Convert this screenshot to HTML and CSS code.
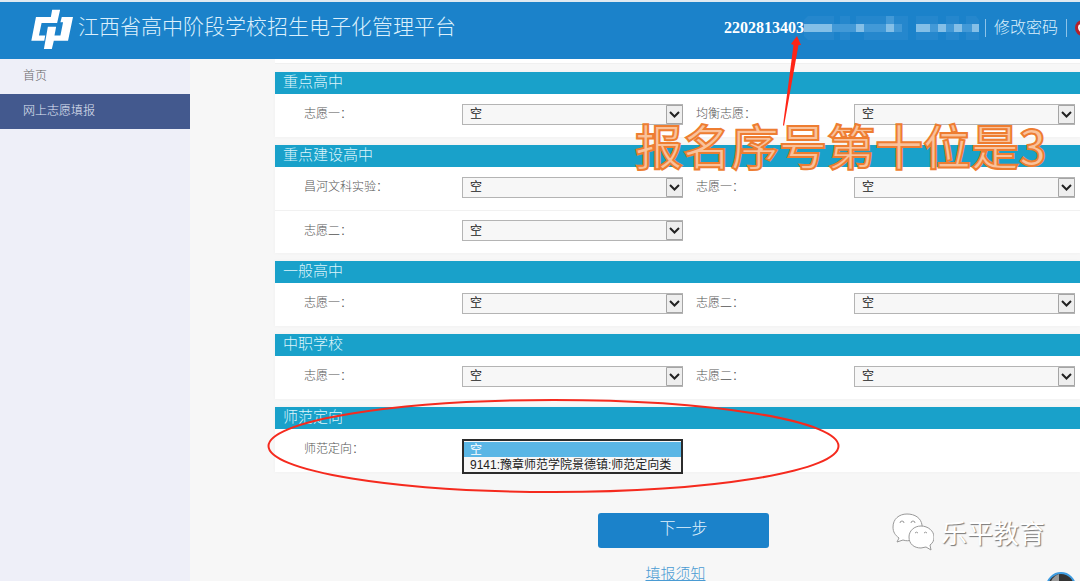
FILE: index.html
```html
<!DOCTYPE html>
<html lang="zh-CN">
<head>
<meta charset="utf-8">
<meta name="viewport" content="width=device-width, initial-scale=1">
<title>江西省高中阶段学校招生电子化管理平台</title>
<link rel="stylesheet" href="styles.css">
</head>
<body>
<svg class="defs" aria-hidden="true">
  <symbol id="arrow" viewBox="0 0 17 19"><path class="arrow-box" d="M.5 .5H16.5V18.5H.5Z"/><path class="arrow-mark" d="M4 7L8.500 11.500L13 7"/></symbol>
</svg>
<div class="page">
  <header class="header">
    <svg class="logo" viewBox="94 26 130 124" aria-hidden="true">
      <path d="M158 28H182L173 68H126L118 106H137L134 122H95L109 50H154Z"/>
      <path d="M145 80H170L165 106H183L191 66H183L187 50H221L206 122H163L157 147H133Z"/>
    </svg>
    <h1 class="brand">江西省高中阶段学校招生电子化管理平台</h1>
    <div class="account">
      <span class="number">2202813403</span>
      <svg class="mosaic" viewBox="0 0 176 24" aria-hidden="true">
        <path class="m1" d="M4 0H30V24H4L0 20V4ZM36 0H46V24H36ZM52 0H78V12H104V24H60V15H52ZM78 0H104V12H78ZM112 0H134V24H112ZM142 0H155V24H142ZM162 0H172L175 4V24H162Z"/>
        <path class="m2" d="M28 8H52V16H28ZM52 8H98V16H52ZM112 8H175V16H112ZM82 0H90V16H82Z"/>
        <path class="m3" d="M0 8H28V16H0ZM52 8H60V16H52ZM82 8H90V16H82ZM112 8H126V16H112ZM134 8H142V16H134ZM150 8H158V16H150ZM168 8H175V16H168Z"/>
      </svg>
      <a class="password" href="#">修改密码</a>
      <a class="exit" href="#" aria-label="退出"><svg viewBox="0 0 16 16"><circle cx="8" cy="8" r="8"/><path d="M5 5A4 4 0 1 0 11 5M8 3V8"/></svg></a>
    </div>
  </header>
  <div class="columns">
    <nav class="sidebar">
      <a class="item" href="#">首页</a>
      <a class="item active" href="#" aria-current="page">网上志愿填报</a>
    </nav>
    <main class="main">
      <form class="form">
        <div class="tail"></div>
        <section class="panel">
          <h2 class="title">重点高中</h2>
          <div class="row">
            <label for="a1">志愿一：</label><div class="control"><select id="a1"><option>空</option></select><svg><use href="#arrow"/></svg></div>
            <label class="second" for="a2">均衡志愿：</label><div class="control"><select id="a2"><option>空</option></select><svg><use href="#arrow"/></svg></div>
          </div>
        </section>
        <section class="panel">
          <h2 class="title">重点建设高中</h2>
          <div class="row">
            <label for="b1">昌河文科实验：</label><div class="control"><select id="b1"><option>空</option></select><svg><use href="#arrow"/></svg></div>
            <label class="second" for="b2">志愿一：</label><div class="control"><select id="b2"><option>空</option></select><svg><use href="#arrow"/></svg></div>
          </div>
          <div class="row">
            <label for="b3">志愿二：</label><div class="control"><select id="b3"><option>空</option></select><svg><use href="#arrow"/></svg></div>
          </div>
        </section>
        <section class="panel">
          <h2 class="title">一般高中</h2>
          <div class="row">
            <label for="c1">志愿一：</label><div class="control"><select id="c1"><option>空</option></select><svg><use href="#arrow"/></svg></div>
            <label class="second" for="c2">志愿二：</label><div class="control"><select id="c2"><option>空</option></select><svg><use href="#arrow"/></svg></div>
          </div>
        </section>
        <section class="panel">
          <h2 class="title">中职学校</h2>
          <div class="row">
            <label for="d1">志愿一：</label><div class="control"><select id="d1"><option>空</option></select><svg><use href="#arrow"/></svg></div>
            <label class="second" for="d2">志愿二：</label><div class="control"><select id="d2"><option>空</option></select><svg><use href="#arrow"/></svg></div>
          </div>
        </section>
        <section class="panel">
          <h2 class="title">师范定向</h2>
          <div class="row">
            <label for="e1">师范定向：</label>
            <div class="control"><select class="list" id="e1" size="2"><option selected>空</option><option>9141:豫章师范学院景德镇:师范定向类</option></select></div>
          </div>
        </section>
        <div class="actions">
          <button class="next" type="button">下一步</button>
          <a class="notice" href="#">填报须知</a>
        </div>
      </form>
    </main>
  </div>
  <svg class="marks" viewBox="0 0 1080 581" aria-hidden="true">
    <ellipse cx="553.500" cy="446" rx="285" ry="46"/>
    <path d="M797 36L801 45L798.500 45L784 126L783 125L793.500 45L791 44Z"/>
  </svg>
  <p class="callout">报名序号第十位是3</p>
  <div class="watermark">
    <svg viewBox="0 0 42 38" aria-hidden="true">
      <path d="M15 1C7 1 1 6 1 14C1 19 3 22 7 25L5 29L11 27C14 28 17 28 19 27C28 26 31 20 30 12C29 5 23 1 15 1Z"/>
      <path d="M29 13C22 13 17 18 17 24C17 31 22 35 29 35L34 34L39 37L38 32C41 30 42 27 42 24C42 18 36 13 29 13Z"/>
      <path class="eyes" d="M8 10A2 2 0 0 1 12 10M19 10A2 2 0 0 1 23 10M23 20A2 2 0 0 1 26 20M32 20A2 2 0 0 1 35 20"/>
    </svg>
    <span>乐平教育</span>
  </div>
  <svg class="avatar" viewBox="0 0 30 30" aria-hidden="true"><circle cx="15" cy="15" r="14"/><path d="M13 2V14H4A13 13 0 0 1 13 2Z"/></svg>
</div>
</body>
</html>
```
FILE: styles.css
```css
* { box-sizing: border-box; }
body { margin: 0; font-family: "Liberation Serif", "Noto Sans CJK SC", serif; font-weight: 300; font-size: 12px; line-height: 20px; color: #555; background: #f7f7f7; }
h1, h2, p { margin: 0; font-weight: 300; }
a { color: inherit; text-decoration: none; }
.defs { position: absolute; width: 0; height: 0; }
.page { position: relative; display: flex; flex-direction: column; height: 100vh; overflow: hidden; }
.header { display: flex; flex: none; align-items: flex-start; height: 59px; padding: 7px 0 0 31px; border-top: 2px solid #dfe9f1; background: #1b82ca; color: #dcf0fc; }
.logo { width: 43px; height: 41px; fill: #fff; }
.brand { flex: 1; margin-left: 4px; font-size: 21px; line-height: 36px; white-space: nowrap; }
.account { display: flex; align-items: center; height: 38px; font-size: 16px; }
.number { font-weight: 700; color: #fff; }
.mosaic { width: 176px; height: 24px; }
.m1 { fill: #2587cd; }
.m2 { fill: #4299d7; }
.m3 { fill: #84bfe7; }
.password { margin-left: 5px; padding: 0 8px; border-left: 1px solid #8dc3e8; border-right: 1px solid #8dc3e8; line-height: 18px; white-space: nowrap; }
.exit { width: 5px; height: 16px; margin-left: 8px; overflow: hidden; }
.exit svg { display: block; width: 16px; height: 16px; fill: #b5202b; }
.exit path { fill: none; stroke: #fff; stroke-width: 2; }
.columns { display: flex; flex: 1; min-height: 0; }
.sidebar { flex: none; width: 190px; background: #eeeff8; }
.item { display: block; height: 35px; padding-left: 23px; line-height: 35px; color: #666; }
.active { background: #43598e; color: #e2e8f5; }
.main { flex: 1; padding-left: 85px; }
.form { display: flex; flex-direction: column; gap: 8px; }
.tail { height: 5px; background: #fff; border-bottom: 1px solid #f0f0f0; }
.panel { background: #fff; box-shadow: 0 0 3px #eee; }
.title { height: 22px; padding-left: 8px; background: #19a1ca; color: #dcf4fb; font-size: 15px; line-height: 20px; }
.row { display: grid; grid-template-columns: 158px minmax(0, 1fr) 171px minmax(0, 1fr); align-items: center; height: 43px; padding: 0 5px 3px 29px; }
.row + .row { border-top: 1px solid #f1f1f1; }
.second { padding-left: 13px; }
.control { position: relative; display: grid; height: 21px; }
.control select { width: 100%; height: 21px; padding: 0 7px; border: 1px solid #b4b4b4; border-radius: 0; appearance: none; outline: 0; background: #f7f7f7; color: #222; font-family: "Liberation Sans", "Noto Sans CJK SC", sans-serif; font-size: 12px; }
.control svg { position: absolute; top: 1px; right: 0; width: 17px; height: 19px; pointer-events: none; }
.arrow-box { fill: #eee; stroke: #a5a5a5; }
.arrow-mark { fill: none; stroke: #222; stroke-width: 2; }
.control .list { position: absolute; top: 0; left: 0; height: 35px; padding: 1px 0 0; border: 2px solid #2b2b2b; overflow: hidden; }
.list option { display: flex; align-items: center; height: 15px; min-height: 15px; padding: 0 6px 2px; line-height: 15px; }
.list option:checked { background: #5ab6e5 linear-gradient(#5ab6e5, #5ab6e5); color: #fff; }
.actions { display: flex; flex-direction: column; align-items: center; gap: 16px; margin-top: 33px; padding-left: 12px; }
.next { width: 171px; height: 35px; padding: 0 0 4px; border: 0; border-radius: 3px; background: #1b82ca; color: #e2f3fd; font: inherit; font-size: 16px; }
.notice { margin-right: 16px; color: #4a9bd3; font-size: 15px; line-height: 20px; text-decoration: underline; }
.marks { position: absolute; top: 0; left: 0; width: 1080px; height: 581px; pointer-events: none; }
.marks ellipse { fill: none; stroke: #f52a1e; stroke-width: 2; }
.marks path { fill: #ff2517; }
.callout { position: absolute; top: 122px; left: 635px; color: #f9c29b; font-family: "Noto Sans CJK SC", sans-serif; font-size: 48px; font-weight: 500; line-height: 44px; white-space: nowrap; -webkit-text-stroke: 2px #ee7d31; }
.watermark { position: absolute; top: 513px; left: 892px; display: flex; align-items: center; gap: 7px; color: #fff; font-family: "Noto Sans CJK SC", sans-serif; font-size: 26px; font-weight: 400; line-height: 38px; text-shadow: 1px 1px 1px #777; white-space: nowrap; }
.watermark svg { width: 42px; height: 38px; fill: #fff; stroke: #999; stroke-width: 1; }
.watermark .eyes { fill: none; }
.avatar { position: absolute; top: 572px; left: 1046px; width: 30px; height: 30px; fill: #333; stroke: #3d9be0; stroke-width: 2; }
.avatar path { fill: #999; stroke: none; }
```
